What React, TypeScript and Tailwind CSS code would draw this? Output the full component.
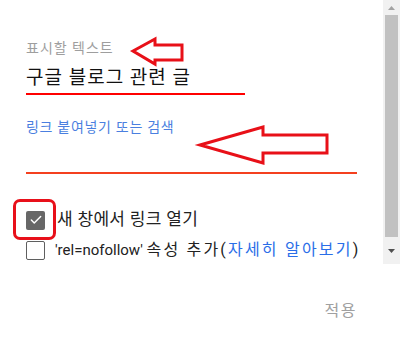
import { Check } from "lucide-react";

const font = { fontFamily: 'Roboto, "Noto Sans CJK KR", sans-serif' };

function Scrollbar() {
  return (
    <div className="w-[17px] h-[264px] bg-[#f1f1f1] flex flex-col items-center">
      <div className="h-[15px] w-full flex items-center justify-center">
        <svg width="7" height="4" viewBox="0 0 7 4">
          <path d="M3.5 0 L7 4 L0 4 Z" fill="#a3a3a3" />
        </svg>
      </div>
      <div className="w-[13px] h-[222px] bg-[#c1c1c1]" />
      <div className="flex-1 w-full flex items-center justify-center">
        <svg width="7" height="4" viewBox="0 0 7 4">
          <path d="M0 0 L7 0 L3.5 4 Z" fill="#505050" />
        </svg>
      </div>
    </div>
  );
}

function Arrows() {
  return (
    <svg className="absolute inset-0 pointer-events-none" width="400" height="344">
      <polygon
        points="133,51 155,39 155,45 182,45 182,60 155,60 155,64"
        fill="none"
        stroke="#e81018"
        strokeWidth="3"
        strokeLinejoin="miter"
      />
      <polygon
        points="200,145 263,127 263,135 327,135 327,153 263,153 263,163"
        fill="none"
        stroke="#e81018"
        strokeWidth="3"
        strokeLinejoin="miter"
      />
    </svg>
  );
}

export default function App() {
  return (
    <div className="relative w-[400px] h-[344px] bg-white overflow-hidden" style={font}>
      <div className="flex">
        <div className="flex-1 pl-[26px]">
          <div className="mt-[40px] h-[16px] leading-[16px] text-[14px] tracking-[1px] text-[#9e9e9e]">표시할 텍스트</div>
          <div className="mt-[10px] w-[219px] border-b-2 border-[#ff0000] pb-[3px]">
            <div className="h-[24px] leading-[24px] text-[19px] tracking-[1px] text-[#111]">구글 블로그 관련 글</div>
          </div>
          <div className="mt-[24px] h-[16px] leading-[16px] text-[14px] tracking-[0.7px] text-[#4a7fe0]">링크 붙여넣기 또는 검색</div>
          <div className="mt-[37px] w-[331px] h-[2px] bg-[#f4401f]" />
          <div className="mt-[31px] flex flex-col">
            <label className="h-[30px] flex items-center gap-[12px]">
              <span className="relative w-[19px] h-[19px] rounded-[2px] bg-[#676767] flex items-center justify-center">
                <Check className="w-[14px] h-[14px] text-white" strokeWidth={2.5} />
                <span className="absolute -left-[13px] -top-[12px] w-[43px] h-[41px] rounded-[7px] border-[3px] border-[#e8101a]" />
              </span>
              <span className="text-[17px] tracking-[0.3px] text-[#222]">새 창에서 링크 열기</span>
            </label>
            <label className="h-[30px] flex items-center gap-[10px]">
              <span className="w-[19px] h-[19px] rounded-[2px] border-[1.5px] border-[#5f5f5f] bg-white" />
              <span className="text-[15px] text-[#222] whitespace-nowrap">
                'rel=nofollow'{" "}
                <span className="text-[16px] tracking-[2.2px]">
                  속성 추가(<span className="text-[#2a6ee8]">자세히 알아보기</span>)
                </span>
              </span>
            </label>
          </div>
        </div>
        <Scrollbar />
      </div>
      <div className="flex justify-end pr-[43px] mt-[34px]">
        <button className="h-[24px] leading-[24px] text-[16px] tracking-[1.5px] text-[#a0a0a0]">적용</button>
      </div>
      <Arrows />
    </div>
  );
}
